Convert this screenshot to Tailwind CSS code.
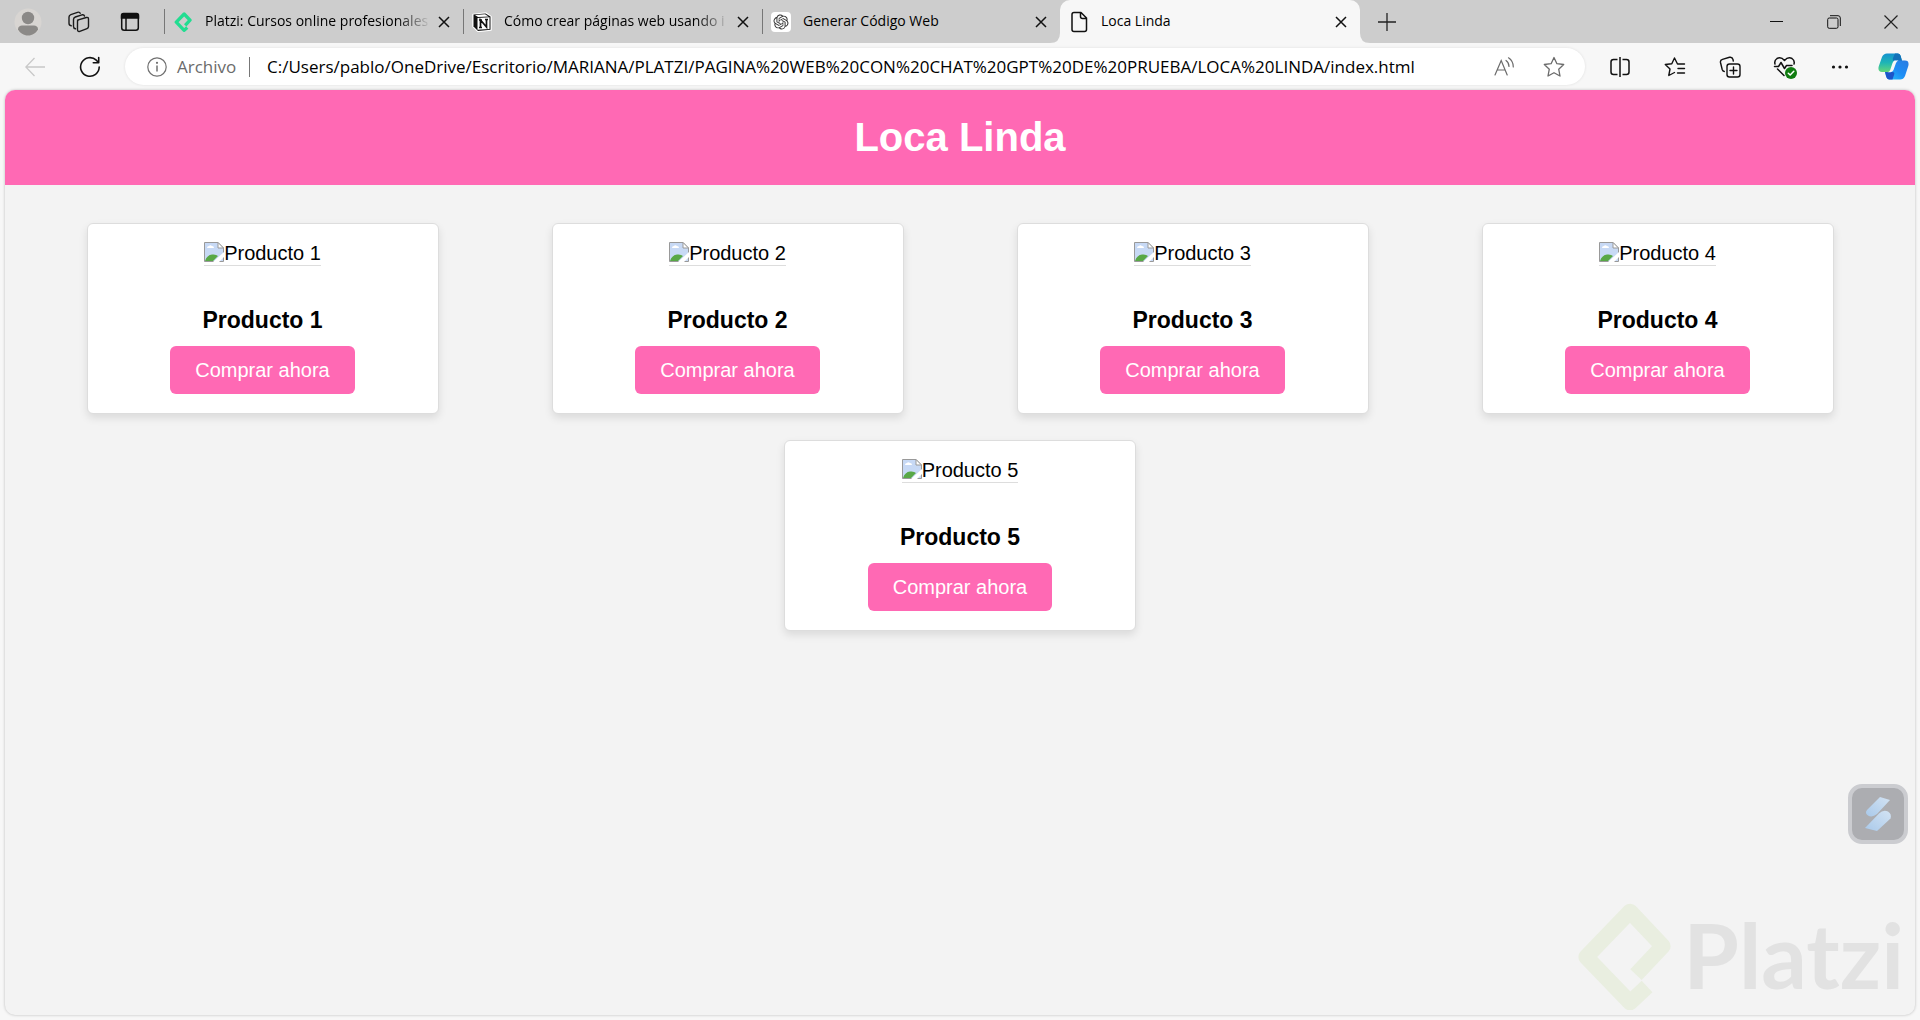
<!DOCTYPE html>
<html lang="es">
<head>
    <meta charset="UTF-8">
    <meta name="viewport" content="width=device-width, initial-scale=1.0">
    <title>Loca Linda</title>
    <script src="https://cdn.jsdelivr.net/npm/@tailwindcss/browser@4"></script>
</head>
<body class="flex min-h-screen flex-col bg-[#f7f7f7] font-['Open_Sans','Noto_Sans',sans-serif] text-black">

    <!-- Barra de pestañas -->
    <div class="flex h-[43px] items-stretch bg-[#cdcdcd]">
        <div class="flex w-[164px] shrink-0 items-stretch pl-[2px]">
            <button class="flex w-[51px] items-center justify-center" aria-label="Perfil">
                <svg class="size-7" viewBox="0 0 28 28">
                    <circle cx="14" cy="14" r="13.5" fill="#d8d5d2"/>
                    <circle cx="14" cy="10" r="6.2" fill="#8b8987"/>
                    <path d="M4 21.5C4 18.5 6 17.500 8 17.500H20C22 17.500 24 18.500 24 21.500C22 25 18.500 27.500 14 27.500S6 25 4 21.500Z" fill="#8b8987"/>
                </svg>
            </button>
            <button class="flex w-[51px] items-center justify-center" aria-label="Áreas de trabajo">
                <svg class="size-6" viewBox="0 0 24 24" fill="none" stroke="#1b1b1b" stroke-width="1.400" stroke-linejoin="round" stroke-linecap="round">
                    <path d="M10.500 10.200 19.300 7.500Q21.500 7 21.500 9.200V16.500Q21.500 18 20 18.600L12.800 21.300Q10.500 22 10.500 19.500V11.500Q10.500 10.400 11.500 9.900"/>
                    <path d="M8.500 18.800Q6.500 18.500 6.500 16.500V9.500Q6.500 7.600 8.300 7L15 4.800Q17 4.300 17.500 6"/>
                    <path d="M4.200 15.800Q2 15.300 2 13.200V7Q2 5.200 3.800 4.600L10.500 2.300Q12.600 1.700 13.200 3.300"/>
                </svg>
            </button>
            <button class="flex w-[51px] items-center justify-center" aria-label="Acciones de pestaña">
                <svg class="size-5" viewBox="0 0 20 20" fill="none" stroke="#111" stroke-width="1.500">
                    <rect x="1.700" y="1.700" width="16.600" height="16.600" rx="2.500"/>
                    <path d="M1.500 6V3.500Q1.500 1.500 3.500 1.500H16.500Q18.500 1.500 18.500 3.500V6Z" fill="#111"/>
                    <path d="M6 6V18"/>
                </svg>
            </button>
        </div>

        <div class="flex w-[299px] items-center">
            <span class="h-[25px] w-px bg-[#777]"></span>
            <svg class="ml-2 size-5 shrink-0" viewBox="50 55 285 340" fill="none" stroke="#22dd91" stroke-width="56" stroke-linejoin="round">
                <path d="M230 282 312 195 212 89 78 228 212 367 264 318"/>
            </svg>
            <a href="#" class="ml-3 flex-1 overflow-hidden pb-0.5 text-sm whitespace-nowrap mask-r-from-85%">Platzi: Cursos online profesionales</a>
            <button class="flex w-8 pl-[7px]" aria-label="Cerrar pestaña">
                <svg class="size-3" viewBox="0 0 12 12" stroke="#111" stroke-width="1.500"><path d="M1 1 11 11M11 1 1 11"/></svg>
            </button>
        </div>
        <div class="flex w-[299px] items-center">
            <span class="h-[25px] w-px bg-[#777]"></span>
            <svg class="ml-2 size-5 shrink-0" viewBox="0 0 20 20">
                <path d="M1 2.500 14 1 19 4.500V18L6 19.500 1 14.500Z" fill="#fff" stroke="#fff" stroke-width="1.500" stroke-linejoin="round"/>
                <path d="M1.500 2.500 13.500 1.500 18.500 4.500V17.800L6 19 1.500 14.500Z" fill="#111"/>
                <path d="M3 2.900 13 2.300 16.500 4.400 6 5Z" fill="#fff"/>
                <path d="M5.500 6 17.500 5.300V17L5.500 17.700Z" fill="#fff"/>
                <path d="M8.500 15.500V8L14.500 15V7.500M7 8H10M13 7.500H16M7 15.500H10" fill="none" stroke="#111" stroke-width="1.700"/>
            </svg>
            <a href="#" class="ml-3 flex-1 overflow-hidden pb-0.5 text-sm whitespace-nowrap mask-r-from-85%">Cómo crear páginas web usando i</a>
            <button class="flex w-8 pl-[7px]" aria-label="Cerrar pestaña">
                <svg class="size-3" viewBox="0 0 12 12" stroke="#111" stroke-width="1.500"><path d="M1 1 11 11M11 1 1 11"/></svg>
            </button>
        </div>
        <div class="flex w-[298px] items-center">
            <span class="h-[25px] w-px bg-[#777]"></span>
            <svg class="ml-2 size-5 shrink-0 rounded-sm bg-white" viewBox="-4 -4 32 32" fill="#333">
                <path d="M22.2819 9.8211a5.9847 5.9847 0 0 0-.5157-4.9108 6.0462 6.0462 0 0 0-6.5098-2.9A6.0651 6.0651 0 0 0 4.9807 4.1818a5.9847 5.9847 0 0 0-3.9977 2.9 6.0462 6.0462 0 0 0 .7427 7.0966 5.98 5.98 0 0 0 .511 4.9107 6.051 6.051 0 0 0 6.5146 2.9001A5.9847 5.9847 0 0 0 13.2599 24a6.0557 6.0557 0 0 0 5.7718-4.2058 5.9894 5.9894 0 0 0 3.9977-2.9001 6.0557 6.0557 0 0 0-.7475-7.0729zm-9.022 12.6081a4.4755 4.4755 0 0 1-2.8764-1.0408l.1419-.0804 4.7783-2.7582a.7948.7948 0 0 0 .3927-.6813v-6.7369l2.02 1.1686a.071.071 0 0 1 .038.052v5.5826a4.504 4.504 0 0 1-4.4945 4.4944zm-9.6607-4.1254a4.4708 4.4708 0 0 1-.5346-3.0137l.142.0852 4.783 2.7582a.7712.7712 0 0 0 .7806 0l5.8428-3.3685v2.3324a.0804.0804 0 0 1-.0332.0615L9.74 19.9502a4.4992 4.4992 0 0 1-6.1408-1.6464zM2.3408 7.8956a4.485 4.485 0 0 1 2.3655-1.9728V11.6a.7664.7664 0 0 0 .3879.6765l5.8144 3.3543-2.0201 1.1685a.0757.0757 0 0 1-.071 0l-4.8303-2.7865A4.504 4.504 0 0 1 2.3408 7.872zm16.5963 3.8558L13.1038 8.364 15.1192 7.2a.0757.0757 0 0 1 .071 0l4.8303 2.7913a4.4944 4.4944 0 0 1-.6765 8.1042v-5.6772a.79.79 0 0 0-.407-.667zm2.0107-3.0231l-.142-.0852-4.7735-2.7818a.7759.7759 0 0 0-.7854 0L9.409 9.2297V6.8974a.0662.0662 0 0 1 .0284-.0615l4.8303-2.7866a4.4992 4.4992 0 0 1 6.6802 4.66zM8.3065 12.863l-2.02-1.1638a.0804.0804 0 0 1-.038-.0567V6.0742a4.4992 4.4992 0 0 1 7.3757-3.4537l-.142.0805L8.704 5.459a.7948.7948 0 0 0-.3927.6813zm1.0976-2.3654l2.602-1.4998 2.6069 1.4998v2.9994l-2.5974 1.4997-2.6067-1.4997Z"/>
            </svg>
            <a href="#" class="ml-3 flex-1 overflow-hidden pb-0.5 text-sm whitespace-nowrap">Generar Código Web</a>
            <button class="flex w-8 pl-[7px]" aria-label="Cerrar pestaña">
                <svg class="size-3" viewBox="0 0 12 12" stroke="#111" stroke-width="1.500"><path d="M1 1 11 11M11 1 1 11"/></svg>
            </button>
        </div>
        <div class="relative flex w-[300px] items-center rounded-t-[10px] bg-[#f7f7f7]">
            <svg class="absolute bottom-0 -left-[10px] size-[10px]" viewBox="0 0 10 10" fill="#f7f7f7"><path d="M10 0V10H0Q10 10 10 0Z"/></svg>
            <svg class="absolute -right-[10px] bottom-0 size-[10px]" viewBox="0 0 10 10" fill="#f7f7f7"><path d="M0 0V10H10Q0 10 0 0Z"/></svg>
            <svg class="ml-2 size-[22px] shrink-0" viewBox="0 0 22 22" fill="none" stroke="#111" stroke-width="1.500" stroke-linejoin="round">
                <path d="M13 1.500H6Q4 1.500 4 3.500V18.500Q4 20.500 6 20.500H16.500Q18.500 20.500 18.500 18.500V7ZM12.500 1.500V5.500Q12.500 7.500 14.500 7.500H18.500"/>
            </svg>
            <a href="#" class="ml-[11px] flex-1 overflow-hidden pb-0.5 text-sm whitespace-nowrap">Loca Linda</a>
            <button class="flex w-8 pl-[7px]" aria-label="Cerrar pestaña">
                <svg class="size-3" viewBox="0 0 12 12" stroke="#111" stroke-width="1.500"><path d="M1 1 11 11M11 1 1 11"/></svg>
            </button>
        </div>
        <button class="flex w-[54px] items-center justify-center" aria-label="Nueva pestaña">
            <svg class="size-[18px]" viewBox="0 0 18 18" stroke="#222" stroke-width="1.300"><path d="M9 0V18M0 9H18"/></svg>
        </button>

        <div class="ml-auto flex pr-px">
            <button class="flex w-[57px] items-center justify-center" aria-label="Minimizar">
                <svg class="size-[13px]" viewBox="0 0 13 13" stroke="#111"><path d="M0 6.500H13"/></svg>
            </button>
            <button class="flex w-[57px] items-center justify-center" aria-label="Restaurar">
                <svg class="size-[14px]" viewBox="0 0 14 14" fill="none" stroke="#111"><rect x=".7" y="3" width="10.300" height="10.300" rx="1.500"/><path d="M3 .7H11Q13.300 .7 13.300 3V11"/></svg>
            </button>
            <button class="flex w-[57px] items-center justify-center" aria-label="Cerrar">
                <svg class="size-[14px]" viewBox="0 0 14 14" stroke="#222" stroke-width="1.200"><path d="M.5 .5 13.500 13.500M13.500 .5 .5 13.500"/></svg>
            </button>
        </div>
    </div>

    <!-- Barra de direcciones -->
    <div class="flex h-[47px] items-center pl-2">
        <button class="flex w-[54px] justify-center" aria-label="Atrás">
            <svg class="size-5" viewBox="0 0 20 20" fill="none" stroke="#c8c8c8" stroke-width="1.300"><path d="M20 10H1M9.500 1 .8 10 9.500 19"/></svg>
        </button>
        <button class="flex w-[56px] justify-center" aria-label="Actualizar">
            <svg class="size-[22px]" viewBox="0 0 22 22" fill="none" stroke="#111" stroke-width="1.600" stroke-linecap="round" stroke-linejoin="round"><path d="M20.200 11A9.300 9.300 0 1 1 17.300 4.200L19.500 6.500M19.700 1.500V6.700H14.300"/></svg>
        </button>
        <div class="ml-[7px] flex h-[37px] flex-1 items-center rounded-full bg-white pl-[22px] shadow-[0_0_3px_#0000001a]">
            <svg class="size-5" viewBox="0 0 20 20" fill="none" stroke="#707070" stroke-width="1.200"><circle cx="10" cy="10" r="9.200"/><path d="M10 8.500V14.500" stroke-width="1.500"/><circle cx="10" cy="5.800" r=".5" fill="#707070"/></svg>
            <label for="url" class="ml-[10px] w-[60px] text-[17px] text-[#6b6b6b]">Archivo</label>
            <span class="ml-3 h-5 w-px bg-[#777]"></span>
            <input id="url" type="text" class="ml-[17px] min-w-0 flex-1 text-[17px] outline-none" value="C:/Users/pablo/OneDrive/Escritorio/MARIANA/PLATZI/PAGINA%20WEB%20CON%20CHAT%20GPT%20DE%20PRUEBA/LOCA%20LINDA/index.html">
            <button class="flex w-[50px] justify-center" aria-label="Leer en voz alta">
                <svg class="size-5" viewBox="0 0 20 20" fill="none" stroke="#6b6b6b" stroke-width="1.200" stroke-linecap="round"><path d="M1 18 7.200 3.500 13.200 18M3.300 13H11M12 3.500Q15 5.500 15 9.500M14.500 .8Q19.300 4 19.300 10"/></svg>
            </button>
            <button class="mr-[6px] flex w-[50px] justify-center" aria-label="Favorito">
                <svg class="size-[22px]" viewBox="0 0 22 22" fill="none" stroke="#6b6b6b" stroke-width="1.300" stroke-linejoin="round"><path d="M11 1.500 13.900 7.700 20.700 8.500 15.700 13.200 17 20 11 16.700 5 20 6.300 13.200 1.300 8.500 8.100 7.700Z"/></svg>
            </button>
        </div>
        <div class="ml-[7px] flex">
            <button class="flex w-[55px] items-center justify-center" aria-label="Pantalla dividida">
                <svg class="size-5" viewBox="0 0 20 20" fill="none" stroke="#111" stroke-width="1.500"><path d="M10 0V20M7.500 2.500H3.500Q1 2.500 1 5V15Q1 17.500 3.500 17.500H7.500M12.500 2.500H16.500Q19 2.500 19 5V15Q19 17.500 16.500 17.500H12.500"/></svg>
            </button>
            <button class="flex w-[55px] items-center justify-center" aria-label="Favoritos">
                <svg class="size-[22px]" viewBox="0 0 22 22" fill="none" stroke="#111" stroke-width="1.400" stroke-linejoin="round" stroke-linecap="round"><path d="M20.500 8H13.500L10.500 2 7.800 7.700 1.300 8.500 6 13 4.800 19.500 10.500 16.500M14 12.500H20.500M13.500 17H20.500"/></svg>
            </button>
            <button class="flex w-[55px] items-center justify-center" aria-label="Colecciones">
                <svg class="size-[22px]" viewBox="0 0 22 22" fill="none" stroke="#111" stroke-width="1.400" stroke-linecap="round"><rect x="8" y="8" width="13" height="13" rx="2.500"/><path d="M14.500 11V18M11 14.500H18M5.300 15.500Q3.700 15.300 3.200 13.500L1.500 6.500Q1 4 3.500 3.300L10.500 1.300Q13.300 .7 14 3.500L14.300 5"/></svg>
            </button>
            <button class="flex w-[55px] items-center justify-center" aria-label="Rendimiento">
                <svg class="size-[26px]" viewBox="0 0 26 26" fill="none" stroke="#111" stroke-width="1.500" stroke-linecap="round" stroke-linejoin="round">
                    <path d="M3 10Q2 6.500 5 4.500Q9 2.500 12.500 6.500Q16 2.500 20 4.500Q23 6.500 22 10M2.500 12.500H6.500L9 8.500 12.500 14.500 14.500 11.500H20M5.500 15 12 21.500"/>
                    <circle cx="19" cy="19" r="6" fill="#107c10" stroke="none"/><path d="M16.300 19.200 18.200 21 21.800 17.300" stroke="#fff"/>
                </svg>
            </button>
            <button class="flex w-[55px] items-center justify-center" aria-label="Más">
                <svg class="size-[18px]" viewBox="0 0 18 18" fill="#111"><circle cx="2.500" cy="9" r="1.600"/><circle cx="9" cy="9" r="1.600"/><circle cx="15.500" cy="9" r="1.600"/></svg>
            </button>
            <button class="flex w-[53px] items-center justify-center" aria-label="Copilot">
                <svg class="h-[27px] w-[31px]" viewBox="0 0 31 27">
                    <defs>
                        <linearGradient id="cpA" x1="0" y1="0" x2="0" y2="1"><stop offset="0" stop-color="#1492d0"/><stop offset=".5" stop-color="#1fb5b5"/><stop offset="1" stop-color="#63d679"/></linearGradient>
                        <linearGradient id="cpB" x1="1" y1="0" x2="0" y2="1"><stop offset="0" stop-color="#2b7be0"/><stop offset=".5" stop-color="#1e8df5"/><stop offset="1" stop-color="#25c4fa"/></linearGradient>
                    </defs>
                    <path d="M9 .5H20Q22 .7 22.700 3L24 8H19.500L14 19H4Q-.5 19 .7 13.500L4 4Q5.500 .5 9 .5Z" fill="url(#cpA)"/>
                    <path d="M17 .5H20Q22 .7 22.700 3L24 8H17Q14 8 15 5Z" fill="#1271b9"/>
                    <path d="M22 26.500H11Q9 26.300 8.300 24L7 19H12L17 7.500H27Q31.500 7.500 30.300 13L27 23Q25.500 26.500 22 26.500Z" fill="url(#cpB)"/>
                    <path d="M7 19H14.500Q17 19 16 22L14.500 26.500H11Q9 26.300 8.300 24Z" fill="#1c55c9"/>
                    <path d="M16.500 7.500H20.500Q18.700 8 18 10L15.500 17Q14.700 19 12.500 19.300H9.500Q11.500 19 12.200 17L14.500 10Q15.200 8 16.500 7.500Z" fill="#f7f7f7"/>
                </svg>
            </button>
        </div>
    </div>

    <!-- Página -->
    <div class="relative mx-[5px] mb-[5px] flex-1 overflow-hidden rounded-[10px] bg-[#f3f3f3] font-['Liberation_Sans',Arial,sans-serif] shadow-[0_0_3px_#00000040]">
        <header class="bg-[#ff69b4] py-6 text-center">
            <h1 class="text-[40px] leading-[47px] font-bold text-white">Loca Linda</h1>
        </header>

        <main class="flex flex-wrap justify-around p-[25px]">
            <div class="mx-3 my-[13px] flex w-[352px] flex-col items-center rounded-md border border-[#ddd] bg-white px-5 pt-[18px] pb-[19px] text-center shadow-[0_4px_8px_#0000001a]">
                <div class="flex border-b border-[#ddd] text-xl leading-[23px]">
                    <svg class="size-5" viewBox="0 0 20 20"><path d="M.5 .5H14L19.500 6V19.500H.5Z" fill="#c7d9f5" stroke="#999"/><path d="M3 6Q3 4 5 4Q6 2.500 8 4Q10 4 10 6Z" fill="#fff"/><path d="M1 19Q3 13 8 12.500Q12 12 14 14L9 19Z" fill="#58a846"/><path d="M9 20 20 10V15L15 20Z" fill="#fff"/><path d="M14 .5V6H19.500Z" fill="#fff" stroke="#999"/></svg>
                    <span>Producto 1</span>
                </div>
                <h3 class="mt-[41px] text-[23px] leading-[27px] font-bold">Producto 1</h3>
                <button class="mt-3 h-12 rounded-md bg-[#ff69b4] px-[25px] text-xl text-white">Comprar ahora</button>
            </div>
            <div class="mx-3 my-[13px] flex w-[352px] flex-col items-center rounded-md border border-[#ddd] bg-white px-5 pt-[18px] pb-[19px] text-center shadow-[0_4px_8px_#0000001a]">
                <div class="flex border-b border-[#ddd] text-xl leading-[23px]">
                    <svg class="size-5" viewBox="0 0 20 20"><path d="M.5 .5H14L19.500 6V19.500H.5Z" fill="#c7d9f5" stroke="#999"/><path d="M3 6Q3 4 5 4Q6 2.500 8 4Q10 4 10 6Z" fill="#fff"/><path d="M1 19Q3 13 8 12.500Q12 12 14 14L9 19Z" fill="#58a846"/><path d="M9 20 20 10V15L15 20Z" fill="#fff"/><path d="M14 .5V6H19.500Z" fill="#fff" stroke="#999"/></svg>
                    <span>Producto 2</span>
                </div>
                <h3 class="mt-[41px] text-[23px] leading-[27px] font-bold">Producto 2</h3>
                <button class="mt-3 h-12 rounded-md bg-[#ff69b4] px-[25px] text-xl text-white">Comprar ahora</button>
            </div>
            <div class="mx-3 my-[13px] flex w-[352px] flex-col items-center rounded-md border border-[#ddd] bg-white px-5 pt-[18px] pb-[19px] text-center shadow-[0_4px_8px_#0000001a]">
                <div class="flex border-b border-[#ddd] text-xl leading-[23px]">
                    <svg class="size-5" viewBox="0 0 20 20"><path d="M.5 .5H14L19.500 6V19.500H.5Z" fill="#c7d9f5" stroke="#999"/><path d="M3 6Q3 4 5 4Q6 2.500 8 4Q10 4 10 6Z" fill="#fff"/><path d="M1 19Q3 13 8 12.500Q12 12 14 14L9 19Z" fill="#58a846"/><path d="M9 20 20 10V15L15 20Z" fill="#fff"/><path d="M14 .5V6H19.500Z" fill="#fff" stroke="#999"/></svg>
                    <span>Producto 3</span>
                </div>
                <h3 class="mt-[41px] text-[23px] leading-[27px] font-bold">Producto 3</h3>
                <button class="mt-3 h-12 rounded-md bg-[#ff69b4] px-[25px] text-xl text-white">Comprar ahora</button>
            </div>
            <div class="mx-3 my-[13px] flex w-[352px] flex-col items-center rounded-md border border-[#ddd] bg-white px-5 pt-[18px] pb-[19px] text-center shadow-[0_4px_8px_#0000001a]">
                <div class="flex border-b border-[#ddd] text-xl leading-[23px]">
                    <svg class="size-5" viewBox="0 0 20 20"><path d="M.5 .5H14L19.500 6V19.500H.5Z" fill="#c7d9f5" stroke="#999"/><path d="M3 6Q3 4 5 4Q6 2.500 8 4Q10 4 10 6Z" fill="#fff"/><path d="M1 19Q3 13 8 12.500Q12 12 14 14L9 19Z" fill="#58a846"/><path d="M9 20 20 10V15L15 20Z" fill="#fff"/><path d="M14 .5V6H19.500Z" fill="#fff" stroke="#999"/></svg>
                    <span>Producto 4</span>
                </div>
                <h3 class="mt-[41px] text-[23px] leading-[27px] font-bold">Producto 4</h3>
                <button class="mt-3 h-12 rounded-md bg-[#ff69b4] px-[25px] text-xl text-white">Comprar ahora</button>
            </div>
            <div class="mx-3 my-[13px] flex w-[352px] flex-col items-center rounded-md border border-[#ddd] bg-white px-5 pt-[18px] pb-[19px] text-center shadow-[0_4px_8px_#0000001a]">
                <div class="flex border-b border-[#ddd] text-xl leading-[23px]">
                    <svg class="size-5" viewBox="0 0 20 20"><path d="M.5 .5H14L19.500 6V19.500H.5Z" fill="#c7d9f5" stroke="#999"/><path d="M3 6Q3 4 5 4Q6 2.500 8 4Q10 4 10 6Z" fill="#fff"/><path d="M1 19Q3 13 8 12.500Q12 12 14 14L9 19Z" fill="#58a846"/><path d="M9 20 20 10V15L15 20Z" fill="#fff"/><path d="M14 .5V6H19.500Z" fill="#fff" stroke="#999"/></svg>
                    <span>Producto 5</span>
                </div>
                <h3 class="mt-[41px] text-[23px] leading-[27px] font-bold">Producto 5</h3>
                <button class="mt-3 h-12 rounded-md bg-[#ff69b4] px-[25px] text-xl text-white">Comprar ahora</button>
            </div>
        </main>

        <!-- Botón flotante de la extensión -->
        <button class="absolute right-[7px] bottom-[171px] flex size-[60px] items-center justify-center rounded-[14px] border-4 border-[#cbccd0] bg-[#acadb1]" aria-label="Asistente">
            <svg class="size-9" viewBox="0 0 36 36">
                <defs><linearGradient id="sg" x1="0" y1="1" x2="1" y2="0"><stop offset="0" stop-color="#a9c9ea"/><stop offset="1" stop-color="#d3e3f3"/></linearGradient></defs>
                <path d="M20 1 30 4 17 18Q12 22 8 19.500Q4.500 17 7 14Z" fill="url(#sg)"/>
                <path d="M17 35 5 32 19 17.500Q23 13.500 28 15.500Q32 18 30.500 22.500Z" fill="url(#sg)"/>
            </svg>
        </button>

        <!-- Marca de agua -->
        <div class="absolute right-[11px] bottom-[5px] flex items-center gap-3 text-[#e2e2e2]">
            <svg class="h-[108px] w-[93px]" viewBox="55 60 280 330" fill="none" stroke="#e9eee0" stroke-width="48" stroke-linejoin="round">
                <path d="M230 282 312 195 212 89 78 228 212 367 264 318"/>
            </svg>
            <span class="pb-1 font-['Lato',sans-serif] text-[90px] leading-[88px] font-bold">Platzi</span>
        </div>
    </div>

</body>
</html>
